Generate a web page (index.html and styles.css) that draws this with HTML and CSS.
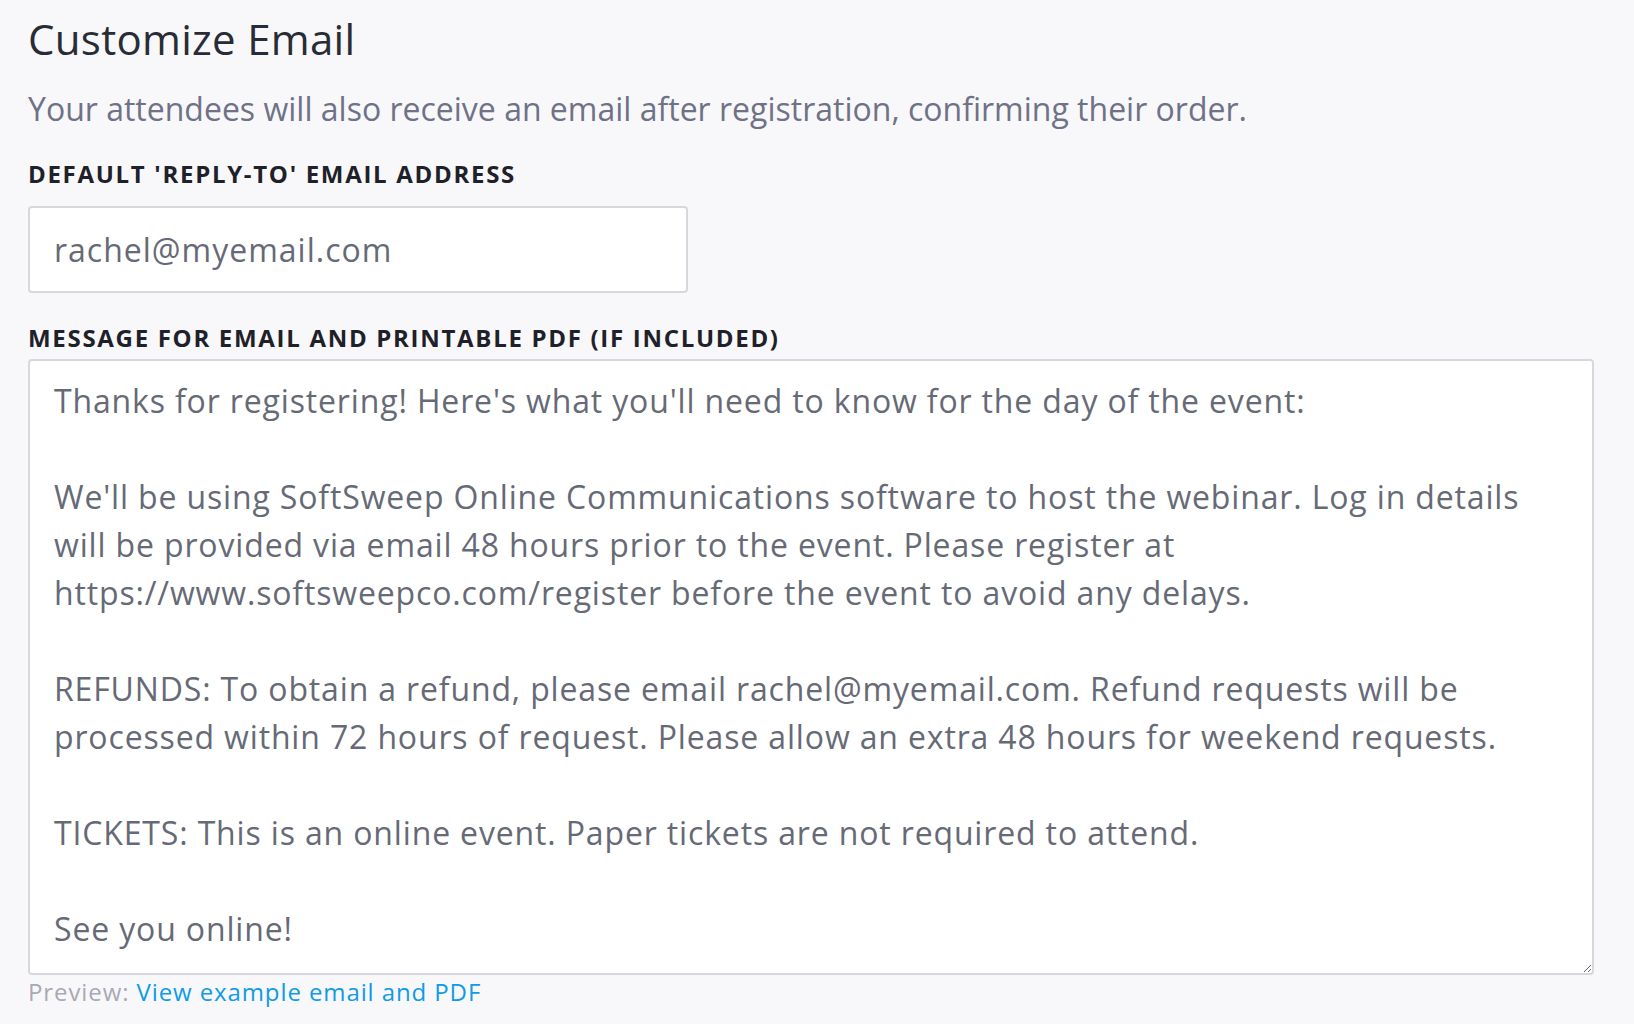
FILE: index.html
```html
<!DOCTYPE html>
<html lang="en">
<head>
<meta charset="utf-8">
<title>Customize Email</title>
<link rel="stylesheet" href="styles.css">
</head>
<body>
<main class="page">
  <h1 class="title">Customize Email</h1>
  <p class="subtitle">Your attendees will also receive an email after registration, confirming their order.</p>

  <label class="field-label" for="reply">DEFAULT 'REPLY-TO' EMAIL ADDRESS</label>
  <input class="text-input" id="reply" type="text" value="rachel@myemail.com">

  <label class="field-label field-label--second" for="msg">MESSAGE FOR EMAIL AND PRINTABLE PDF (IF INCLUDED)</label>
  <textarea class="text-area" id="msg">Thanks for registering! Here's what you'll need to know for the day of the event:

We'll be using SoftSweep Online Communications software to host the webinar. Log in details will be provided via email 48 hours prior to the event. Please register at https://www.softsweepco.com/register before the event to avoid any delays.

REFUNDS: To obtain a refund, please email rachel@myemail.com. Refund requests will be processed within 72 hours of request. Please allow an extra 48 hours for weekend requests.

TICKETS: This is an online event. Paper tickets are not required to attend.

See you online!</textarea>
  <p class="preview">Preview: <a class="preview-link" href="#">View example email and PDF</a></p>
</main>
</body>
</html>
```

FILE: styles.css
```css
html, body {
  margin: 0;
  padding: 0;
  background: #f8f8fa;
}

body {
  font-family: "Open Sans", "Liberation Sans", sans-serif;
  color: #282c35;
}

.page {
  padding: 15px 40px 0 28px;
  display: flex;
  flex-direction: column;
  align-items: flex-start;
}

.title {
  margin: 0;
  font-size: 42px;
  line-height: 48px;
  font-weight: 400;
  letter-spacing: 0.3px;
  color: #282c35;
}

.subtitle {
  margin: 26px 0 0;
  font-size: 32px;
  line-height: 40px;
  color: #6f7287;
}

.field-label {
  margin-top: 30px;
  font-size: 24px;
  line-height: 30px;
  font-weight: 700;
  letter-spacing: 1.7px;
  color: #1e2129;
}

.field-label--second {
  margin-top: 30px;
}

.text-input {
  box-sizing: border-box;
  margin-top: 17px;
  width: 660px;
  height: 87px;
  padding: 0 24px;
  border: 2px solid #d6d8de;
  border-radius: 4px;
  background: #fff;
  font-family: "Open Sans", "Liberation Sans", sans-serif;
  font-size: 32px;
  letter-spacing: 1px;
  color: #666a76;
  outline: none;
}

.text-area {
  box-sizing: border-box;
  margin-top: 6px;
  width: 1566px;
  height: 616px;
  padding: 16px 30px 0 24px;
  border: 2px solid #d6d8de;
  border-radius: 4px;
  background: #fff;
  font-family: "Open Sans", "Liberation Sans", sans-serif;
  font-size: 32px;
  line-height: 48px;
  letter-spacing: 0.85px;
  color: #666a76;
  resize: vertical;
  outline: none;
}

.preview {
  margin: 2px 0 0;
  font-size: 24px;
  line-height: 30px;
  letter-spacing: 0.9px;
  color: #a9a9b5;
}

.preview-link {
  color: #0f9be8;
  text-decoration: none;
}
```
